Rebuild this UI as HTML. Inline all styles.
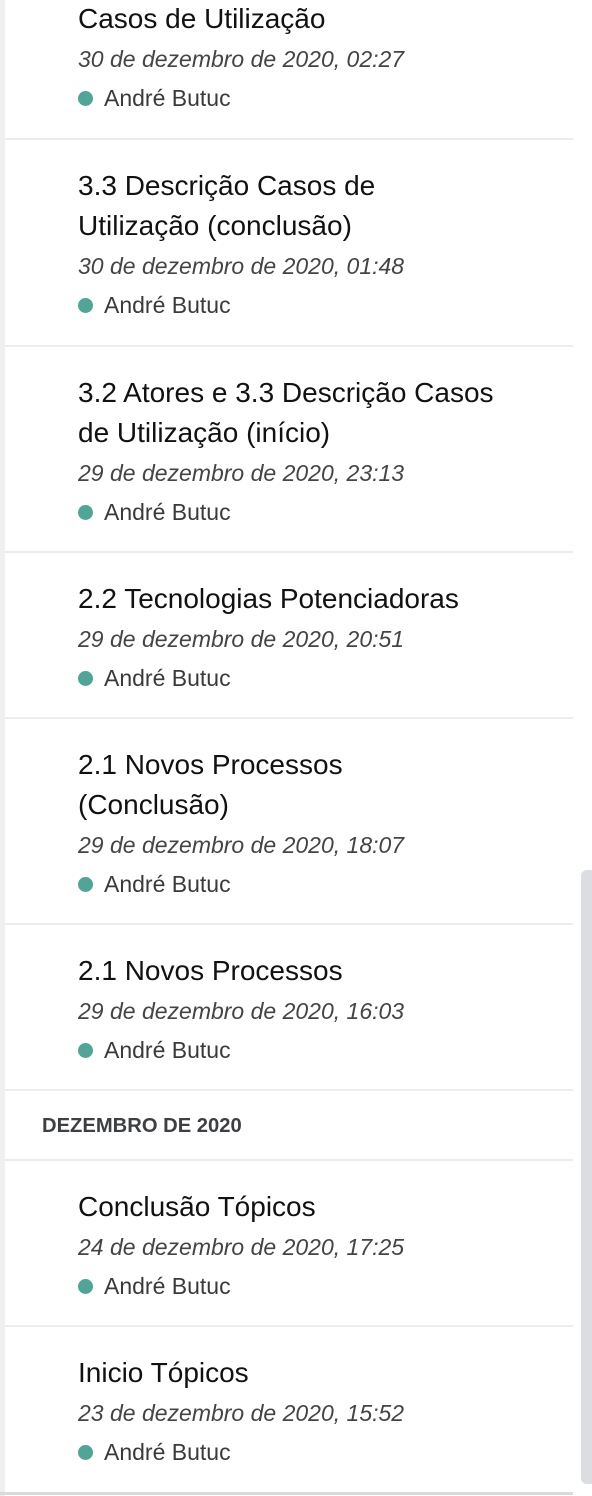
<!DOCTYPE html>
<html><head><meta charset="utf-8"><style>
html,body{margin:0;padding:0;background:#fff;}
body{width:592px;height:1496px;overflow:hidden;position:relative;font-family:"Liberation Sans",sans-serif;}
.strip{position:absolute;left:0;top:0;width:5px;height:1496px;background:#eeeff1;}
.list{position:absolute;left:5px;top:-67px;width:568px;}
.item{padding:26px 0 21px 73px;border-bottom:2px solid #ececec;box-sizing:border-box;}
.t{font-size:28px;line-height:40px;color:#111;white-space:nowrap;}
.d{font-size:23px;line-height:40px;font-style:italic;color:#444;}
.a{font-size:23px;line-height:38px;color:#3a3a3a;display:flex;align-items:center;}
.a i{display:inline-block;width:15px;height:15px;border-radius:50%;background:#52a497;margin-right:11px;}
.h{height:70px;line-height:70px;padding-left:37px;font-size:20.2px;font-weight:bold;color:#3d3f42;border-bottom:2px solid #ececec;box-sizing:border-box;}
.sb{position:absolute;left:581px;top:870px;width:11px;height:614px;background:#dcdde1;border-radius:6px 0 0 6px;}
.bot{position:absolute;left:0;top:1492px;width:573px;height:3px;background:#dadada;}
</style></head><body>
<div class="strip"></div>
<div class="list">
<div class="item" style="height:207px"><div class="t">3.4 Descrição<br>Casos de Utilização</div><div class="d">30 de dezembro de 2020, 02:27</div><div class="a"><i></i>André Butuc</div></div>
<div class="item" style="height:207px"><div class="t">3.3 Descrição Casos de<br>Utilização (conclusão)</div><div class="d">30 de dezembro de 2020, 01:48</div><div class="a"><i></i>André Butuc</div></div>
<div class="item" style="height:206px"><div class="t">3.2 Atores e 3.3 Descrição Casos<br>de Utilização (início)</div><div class="d">29 de dezembro de 2020, 23:13</div><div class="a"><i></i>André Butuc</div></div>
<div class="item" style="height:166px"><div class="t">2.2 Tecnologias Potenciadoras</div><div class="d">29 de dezembro de 2020, 20:51</div><div class="a"><i></i>André Butuc</div></div>
<div class="item" style="height:206px"><div class="t">2.1 Novos Processos<br>(Conclusão)</div><div class="d">29 de dezembro de 2020, 18:07</div><div class="a"><i></i>André Butuc</div></div>
<div class="item" style="height:166px"><div class="t">2.1 Novos Processos</div><div class="d">29 de dezembro de 2020, 16:03</div><div class="a"><i></i>André Butuc</div></div>
<div class="h">DEZEMBRO DE 2020</div>
<div class="item" style="height:166px"><div class="t">Conclusão Tópicos</div><div class="d">24 de dezembro de 2020, 17:25</div><div class="a"><i></i>André Butuc</div></div>
<div class="item" style="height:166px;border-bottom:none"><div class="t">Inicio Tópicos</div><div class="d">23 de dezembro de 2020, 15:52</div><div class="a"><i></i>André Butuc</div></div>
</div>
<div class="sb"></div>
<div class="bot"></div>
</body></html>
